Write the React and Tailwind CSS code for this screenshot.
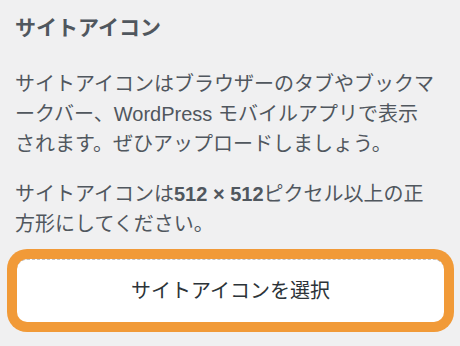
export default function App() {
  return (
    <div
      className="w-[460px] h-[346px] bg-[#f0f0f1] overflow-hidden"
      style={{ fontFamily: '"Liberation Sans", "Noto Sans CJK JP", sans-serif' }}
    >
      <div className="pl-[15px] w-[437px] pt-[13px]">
        <h2 className="text-[21px] leading-[30px] font-bold text-[#50575e]">
          サイトアイコン
        </h2>
        <p className="mt-[26px] text-[20px] leading-[30px] text-[#50575e]">
          サイトアイコンはブラウザーのタブやブックマークバー、WordPress モバイルアプリで表示されます。ぜひアップロードしましょう。
        </p>
        <p className="mt-[20px] text-[20px] leading-[30px] text-[#50575e]">
          サイトアイコンは<strong className="font-bold">512 × 512</strong>ピクセル以上の正方形にしてください。
        </p>
      </div>

      {/* フォーカス中のボタン */}
      <div className="mt-[10px] ml-[7px] w-[447px] rounded-[20px] bg-[#f19a38] p-[10px]">
        <button className="w-full h-[63px] rounded-[10px] bg-white border-t border-dashed border-[#c3c4c7] text-[20px] text-[#2c3338] flex items-center justify-center">
          サイトアイコンを選択
        </button>
      </div>
    </div>
  );
}
